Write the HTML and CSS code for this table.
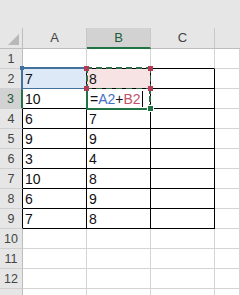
FILE: index.html
```html
<!DOCTYPE html>
<html>
<head>
<meta charset="utf-8">
<link rel="stylesheet" href="styles.css">
</head>
<body>
<div class="top"></div>
<div class="sheet">
  <div class="corner"><span class="tri"></span></div>
  <div class="ch">A</div>
  <div class="ch sel">B</div>
  <div class="ch">C</div>
  <div class="ch rest"></div>

  <div class="rh">1</div>
  <div class="c bb"></div><div class="c bb"></div><div class="c bb"></div><div class="c"></div>

  <div class="rh tb">2</div>
  <div class="c t refa">7</div><div class="c t refb">8</div><div class="c t"></div><div class="c"></div>

  <div class="rh tb sel">3</div>
  <div class="c t">10</div><div class="c t active"><span class="eq">=</span><span class="ra">A2</span><span class="eq">+</span><span class="rb">B2</span><span class="caret"></span></div><div class="c t"></div><div class="c"></div>

  <div class="rh tb">4</div>
  <div class="c t">6</div><div class="c t">7</div><div class="c t"></div><div class="c"></div>

  <div class="rh tb">5</div>
  <div class="c t">9</div><div class="c t">9</div><div class="c t"></div><div class="c"></div>

  <div class="rh tb">6</div>
  <div class="c t">3</div><div class="c t">4</div><div class="c t"></div><div class="c"></div>

  <div class="rh tb">7</div>
  <div class="c t">10</div><div class="c t">8</div><div class="c t"></div><div class="c"></div>

  <div class="rh tb">8</div>
  <div class="c t">6</div><div class="c t">9</div><div class="c t"></div><div class="c"></div>

  <div class="rh tb">9</div>
  <div class="c t">7</div><div class="c t">8</div><div class="c t"></div><div class="c"></div>

  <div class="rh">10</div>
  <div class="c"></div><div class="c"></div><div class="c"></div><div class="c"></div>

  <div class="rh">11</div>
  <div class="c"></div><div class="c"></div><div class="c"></div><div class="c"></div>

  <div class="rh">12</div>
  <div class="c"></div><div class="c"></div><div class="c"></div><div class="c"></div>

  <div class="rh"></div>
  <div class="c"></div><div class="c"></div><div class="c"></div><div class="c"></div>
</div>
</body>
</html>
```
FILE: styles.css
```css
html, body {
  margin: 0;
  padding: 0;
  background: #ffffff;
  overflow: hidden;
}
body {
  width: 240px;
  height: 295px;
  font-family: "Liberation Sans", Arial, sans-serif;
}
.top {
  height: 28px;
  background: #e6e6e6;
}
.sheet {
  display: grid;
  grid-template-columns: 23px 64px 64px 64px 25px;
  grid-template-rows: 21px;
  grid-auto-rows: 20px;
}
.sheet > div {
  box-sizing: border-box;
  border-right: 1px solid #d4d4d4;
  border-bottom: 1px solid #d4d4d4;
}
.corner {
  background: #e6e6e6;
  position: relative;
  border-right-color: #bdbdbd !important;
  border-bottom-color: #bdbdbd !important;
}
.tri {
  position: absolute;
  right: 3px;
  bottom: 3px;
  width: 0;
  height: 0;
  border-left: 11px solid transparent;
  border-bottom: 11px solid #b8b8b8;
}
.ch {
  background: #e6e6e6;
  border-right-color: #c8c8c8 !important;
  border-bottom-color: #bdbdbd !important;
  color: #444;
  font-size: 13px;
  text-align: center;
  line-height: 20px;
}
.ch.sel {
  background: #d2d2d2;
  color: #1e5b3a;
  border-bottom: 2px solid #217346 !important;
}
.ch.rest {
  border-right: none !important;
}
.rh {
  background: #e6e6e6;
  color: #444;
  font-size: 12.5px;
  text-align: center;
  line-height: 20px;
  border-right-color: #bdbdbd !important;
  border-bottom-color: #d0d0d0 !important;
}
.rh.sel {
  background: #d2d2d2;
  color: #1e5b3a;
  border-right: 2px solid #217346 !important;
}
.rh.tb {
  border-right-color: #000 !important;
}
.rh.tb.sel {
  border-right-color: #217346 !important;
}
.c {
  background: #fff;
  font-size: 14px;
  color: #111;
  padding-left: 2px;
  line-height: 21px;
  white-space: nowrap;
  position: relative;
}
.c.bb {
  border-bottom-color: #000;
}
.c.t {
  border-right-color: #000;
  border-bottom-color: #000;
}
.refa {
  background: #dde9f6;
}
.refa::before {
  content: "";
  position: absolute;
  left: -2px;
  top: -2px;
  right: -1px;
  bottom: -2px;
  border-top: 2px solid #41719c;
  border-bottom: 2px solid #41719c;
  border-left: 2px solid #41719c;
}
.refa::after {
  content: "";
  position: absolute;
  left: -3px;
  top: -3px;
  width: 4px;
  height: 4px;
  background: #41719c;
}
.refb {
  background: #f7e3e4;
  overflow: visible;
}
.refb::before {
  content: "";
  position: absolute;
  left: -1px;
  top: -2px;
  right: -2px;
  bottom: -2px;
  border: 2px dashed #2e6b47;
}
.refb::after {
  content: "";
  position: absolute;
  left: -3px;
  top: -3px;
  width: 5px;
  height: 5px;
  background: #b53a55;
  box-shadow: 64px 0 0 #b53a55, 0 20px 0 #b53a55, 64px 20px 0 #b53a55;
  z-index: 3;
}
.active {
  padding-left: 3px;
}
.active::before {
  content: "";
  position: absolute;
  left: -1px;
  top: -1px;
  right: -1px;
  bottom: -2px;
  border-left: 2px solid #217346;
  border-bottom: 2px solid #217346;
  border-right: 2px dashed #2e6b47;
  z-index: 2;
}
.active::after {
  content: "";
  position: absolute;
  right: -4px;
  bottom: -4px;
  width: 5px;
  height: 5px;
  background: #217346;
  border: 1px solid #fff;
  z-index: 3;
}
.eq { color: #111; }
.ra { color: #4472c4; }
.rb { color: #c0506a; }
.caret {
  display: inline-block;
  width: 1px;
  height: 16px;
  background: #000;
  vertical-align: -3px;
  margin-left: 1px;
}
```
